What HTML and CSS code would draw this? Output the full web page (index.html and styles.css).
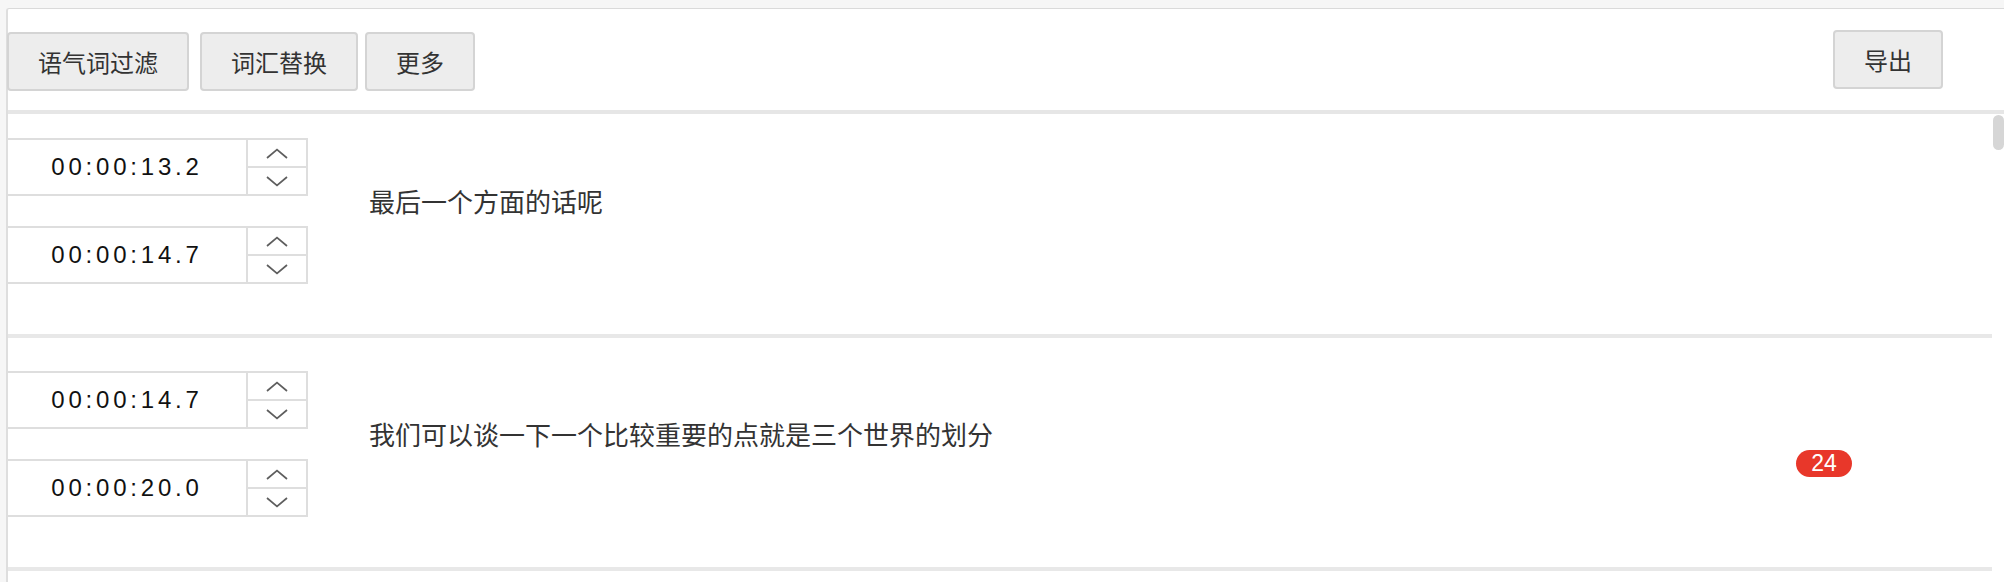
FILE: index.html
```html
<!DOCTYPE html>
<html lang="zh-CN">
<head>
<meta charset="utf-8">
<title>字幕编辑</title>
<link rel="stylesheet" href="styles.css">
</head>
<body>
<div class="panel">
  <div class="toolbar">
    <div class="tool-group">
      <button class="btn btn-first">语气词过滤</button>
      <button class="btn">词汇替换</button>
      <button class="btn">更多</button>
    </div>
    <button class="btn btn-export">导出</button>
  </div>
  <div class="list">
    <div class="rows">
      <div class="rows-inner">
        <div class="row">
          <div class="times">
            <div class="timebox">
              <div class="timeval">00:00:13.2</div>
              <div class="spin">
                <div class="spin-btn"><svg class="chev" viewBox="0 0 22 11"><path d="M1 10 L11 1.5 L21 10"/></svg></div>
                <div class="spin-btn"><svg class="chev" viewBox="0 0 22 11"><path d="M1 1 L11 9.5 L21 1"/></svg></div>
              </div>
            </div>
            <div class="timebox">
              <div class="timeval">00:00:14.7</div>
              <div class="spin">
                <div class="spin-btn"><svg class="chev" viewBox="0 0 22 11"><path d="M1 10 L11 1.5 L21 10"/></svg></div>
                <div class="spin-btn"><svg class="chev" viewBox="0 0 22 11"><path d="M1 1 L11 9.5 L21 1"/></svg></div>
              </div>
            </div>
          </div>
          <div class="line-text">最后一个方面的话呢</div>
        </div>
        <div class="row">
          <div class="times">
            <div class="timebox">
              <div class="timeval">00:00:14.7</div>
              <div class="spin">
                <div class="spin-btn"><svg class="chev" viewBox="0 0 22 11"><path d="M1 10 L11 1.5 L21 10"/></svg></div>
                <div class="spin-btn"><svg class="chev" viewBox="0 0 22 11"><path d="M1 1 L11 9.5 L21 1"/></svg></div>
              </div>
            </div>
            <div class="timebox">
              <div class="timeval">00:00:20.0</div>
              <div class="spin">
                <div class="spin-btn"><svg class="chev" viewBox="0 0 22 11"><path d="M1 10 L11 1.5 L21 10"/></svg></div>
                <div class="spin-btn"><svg class="chev" viewBox="0 0 22 11"><path d="M1 1 L11 9.5 L21 1"/></svg></div>
              </div>
            </div>
          </div>
          <div class="line-text">我们可以谈一下一个比较重要的点就是三个世界的划分</div>
          <span class="badge">24</span>
        </div>
      </div>
    </div>
    <div class="scrollbar"><div class="thumb"></div></div>
  </div>
</div>
</body>
</html>
```

FILE: styles.css
```css
html, body {
  margin: 0;
  padding: 0;
  height: 582px;
  overflow: hidden;
  background: #f6f6f6;
  font-family: "Noto Sans CJK SC", "Liberation Sans", sans-serif;
  color: #333;
}

.panel {
  margin: 8px 0 0 6px;
  background: #fff;
  border-top: 1px solid #dadada;
  border-left: 2px solid #dedede;
  border-top-left-radius: 3px;
  height: 600px;
}

.toolbar {
  display: flex;
  justify-content: space-between;
  align-items: flex-start;
  padding: 23px 61px 19px 0;
  border-bottom: 4px solid #e6e6e6;
}

.tool-group {
  display: flex;
  gap: 7px;
}

.btn {
  height: 59px;
  padding: 0 29px;
  border: 2px solid #d4d4d4;
  border-radius: 4px;
  background: #ededed;
  color: #333;
  font-family: "Noto Sans CJK SC", sans-serif;
  font-size: 24px;
  line-height: 1;
  margin: 0;
  box-sizing: border-box;
}

.btn-first {
  margin-right: 4px;
  margin-left: -1px;
}

.btn-export {
  margin-top: -2px;
}

.list {
  display: flex;
  height: 480px;
}

.rows {
  flex: 1;
  overflow: hidden;
}

.rows-inner {
  margin-top: -9px;
}

.row {
  position: relative;
  display: flex;
  align-items: center;
  padding: 33px 0 50px;
  border-bottom: 4px solid #e8e8e8;
}

.times {
  display: flex;
  flex-direction: column;
  gap: 30px;
  width: 300px;
}

.timebox {
  display: flex;
  height: 58px;
  border: 2px solid #dedede;
  border-left: none;
  box-sizing: border-box;
}

.timeval {
  flex: 1;
  display: flex;
  align-items: center;
  justify-content: center;
  border-right: 2px solid #dedede;
  font-family: "Liberation Sans", Arial, sans-serif;
  font-size: 24px;
  letter-spacing: 3.8px;
  color: #111;
}

.spin {
  width: 58px;
  display: flex;
  flex-direction: column;
}

.spin-btn {
  flex: 1;
  display: flex;
  align-items: center;
  justify-content: center;
}

.spin-btn + .spin-btn {
  border-top: 2px solid #dedede;
}

.chev {
  width: 22px;
  height: 11px;
  fill: none;
  stroke: #5e5e5e;
  stroke-width: 1.7;
}

.line-text {
  margin-left: 61px;
  padding-bottom: 22px;
  font-size: 26px;
  color: #333;
  font-family: "Noto Sans CJK SC", sans-serif;
}

.badge {
  position: absolute;
  top: 112px;
  right: 140px;
  height: 27px;
  min-width: 56px;
  box-sizing: border-box;
  border-radius: 14px;
  background: #e8372a;
  color: #fff;
  font-family: "Liberation Sans", Arial, sans-serif;
  font-size: 23px;
  line-height: 27px;
  text-align: center;
}

.scrollbar {
  width: 12px;
  flex: none;
}

.thumb {
  margin: 1px 0 0 1px;
  width: 11px;
  height: 35px;
  border-radius: 6px;
  background: #d6d6d6;
}
```
